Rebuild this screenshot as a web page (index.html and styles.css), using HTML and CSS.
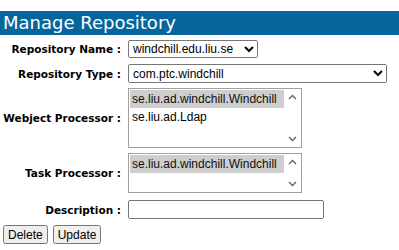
FILE: index.html
```html
<!DOCTYPE html>
<html>
<head>
<meta charset="utf-8">
<link rel="stylesheet" href="styles.css">
</head>
<body>
<h1 class="title">Manage Repository</h1>
<div class="form">
  <label class="lbl">Repository Name :</label>
  <div class="ctl"><select class="sel sel-name"><option>windchill.edu.liu.se</option></select></div>
  <label class="lbl row2">Repository Type :</label>
  <div class="ctl row2"><select class="sel sel-type"><option>com.ptc.windchill</option></select></div>
  <label class="lbl">Webject Processor :</label>
  <div class="ctl">
    <div class="listbox lb-webject">
      <select class="list" multiple size="4"><option selected>se.liu.ad.windchill.Windchill</option><option>se.liu.ad.Ldap</option></select>
      <div class="sbar">
        <svg width="17" height="17" viewBox="0 0 17 17"><path d="M5 10 L8.5 6.5 L12 10" fill="none" stroke="#606060" stroke-width="1.3"/></svg>
        <svg width="17" height="17" viewBox="0 0 17 17"><path d="M5 7 L8.5 10.5 L12 7" fill="none" stroke="#606060" stroke-width="1.3"/></svg>
      </div>
    </div>
  </div>
  <label class="lbl">Task Processor :</label>
  <div class="ctl">
    <div class="listbox lb-task">
      <select class="list" multiple size="2"><option selected>se.liu.ad.windchill.Windchill</option></select>
      <div class="sbar">
        <svg width="17" height="17" viewBox="0 0 17 17"><path d="M5 10 L8.5 6.5 L12 10" fill="none" stroke="#606060" stroke-width="1.3"/></svg>
        <svg width="17" height="17" viewBox="0 0 17 17"><path d="M5 7 L8.5 10.5 L12 7" fill="none" stroke="#606060" stroke-width="1.3"/></svg>
      </div>
    </div>
  </div>
  <label class="lbl lbl-desc">Description :</label>
  <div class="ctl ctl-desc"><input class="txt" type="text"></div>
</div>
<div class="actions"><button class="btn">Delete</button><button class="btn">Update</button></div>
</body>
</html>
```
FILE: styles.css
```css
body {
  margin: 0;
  padding: 11px 0 0 0;
  background: #fff;
  font-family: "DejaVu Sans", Verdana, sans-serif;
}
.title {
  margin: 0;
  height: 24px;
  line-height: 24px;
  background: #06659b;
  color: #fff;
  font-weight: normal;
  font-size: 18px;
  padding-left: 3px;
}
.form {
  display: grid;
  grid-template-columns: 121px auto;
  column-gap: 7px;
  row-gap: 5px;
  margin-top: 5px;
  align-items: center;
}
.lbl {
  text-align: right;
  font-weight: bold;
  font-size: 10.5px;
  color: #000;
  white-space: nowrap;
}
.row2 { margin-top: 1px; }
.ctl { display: flex; }
.ctl-desc, .lbl-desc { margin-top: 2px; }
.sel, .list, .txt, .btn {
  font-family: "Liberation Sans", Arial, sans-serif;
  font-size: 12px;
}
.sel-name { width: 130px; height: 18px; }
.sel-type { width: 259px; height: 19px; }
.listbox {
  display: flex;
  width: 174px;
  box-sizing: border-box;
  border: 1px solid #a0a0a0;
  background: #fff;
}
.lb-webject { height: 60px; }
.lb-task { height: 40px; }
.list {
  flex: 1;
  min-width: 0;
  border: none;
  outline: none;
  padding: 1px 0 0 1px;
  margin: 0;
  overflow: hidden;
  background: #fff;
}
.list option { padding: 2px 2px; }
.sbar {
  width: 17px;
  display: flex;
  flex-direction: column;
  justify-content: space-between;
}
.sbar svg { display: block; }
.txt { width: 196px; height: 19px; box-sizing: border-box; }
.actions {
  display: flex;
  gap: 5px;
  padding: 6px 0 0 3px;
}
.btn { height: 19px; padding: 0 3px; }
```
